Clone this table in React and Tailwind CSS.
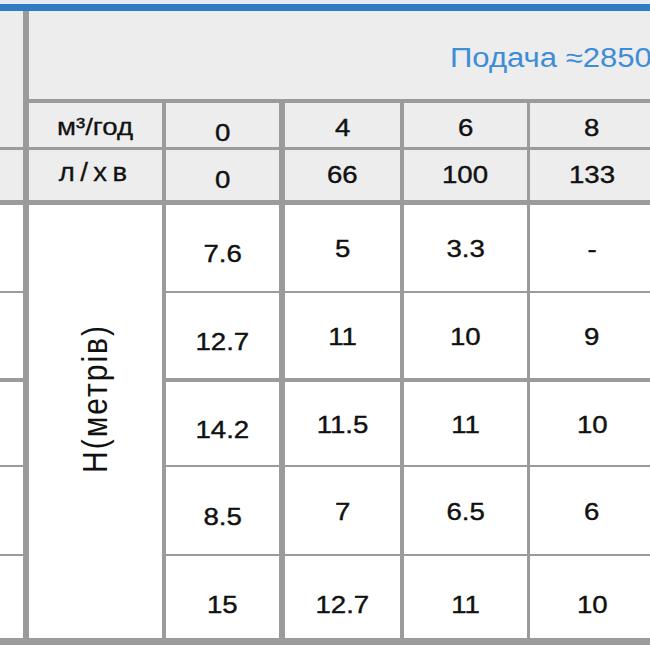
import React from 'react'

const colPos = ['col-start-5', 'col-start-7', 'col-start-9', 'col-start-11']
const rowPos = ['row-start-7', 'row-start-9', 'row-start-11', 'row-start-13', 'row-start-15']

const flowM3 = ['0', '4', '6', '8']
const flowL = ['0', '66', '100', '133']

const heads = [
  ['7.6', '5', '3.3', '-'],
  ['12.7', '11', '10', '9'],
  ['14.2', '11.5', '11', '10'],
  ['8.5', '7', '6.5', '6'],
  ['15', '12.7', '11', '10'],
]

function Cell({ pos, bg = 'bg-white', pad = '', children }) {
  return (
    <div className={`${pos} ${bg} flex items-center justify-center ${pad}`}>
      {children}
    </div>
  )
}

function Num({ children }) {
  return (
    <span className="inline-block scale-x-[1.15] text-[24px] leading-none text-[#111] [-webkit-text-stroke:0.4px_#111]">
      {children}
    </span>
  )
}

function App() {
  return (
    <div className="w-[650px] h-[650px] overflow-hidden bg-white font-['Liberation_Sans','Noto_Sans_CJK_SC',sans-serif]">
      <div className="h-[4px] bg-[#e4ebf2]" />
      <div className="h-[7px] bg-[#2e7dc2]" />

      <div className="w-[654px] grid bg-[#9b9b9b] grid-cols-[23px_6px_133px_4px_113px_6px_115px_4px_123px_3px_124px] grid-rows-[88px_4px_44px_3px_50px_5px_86px_2px_85px_4px_83px_2px_87px_2px_82px_7px]">
        {/* left column (cut off) */}
        <div className="col-start-1 row-start-1 row-end-4 bg-[#ededed]" />
        <div className="col-start-1 row-start-5 bg-[#ededed]" />
        {rowPos.map((r) => (
          <div key={r} className={`col-start-1 ${r} bg-white`} />
        ))}

        {/* flow header */}
        <div className="col-start-3 col-end-12 row-start-1 bg-[#ededed] flex items-center pl-[421px] pt-[6px]">
          <span className="inline-block origin-left scale-x-[1.15] whitespace-nowrap text-[27px] leading-none text-[#3d8ed6]">
            Подача ≈2850
          </span>
        </div>

        <Cell pos="col-start-3 row-start-3" bg="bg-[#ededed]" pad="pt-[4px]">
          <span className="inline-block scale-x-[1.15] text-[24px] leading-none text-[#111] [-webkit-text-stroke:0.3px_#111]">
            м³/год
          </span>
        </Cell>
        <Cell pos="col-start-3 row-start-5" bg="bg-[#ededed]" pad="pb-[6px]">
          <span className="inline-block scale-x-[1.1] tracking-[5px] text-[25px] leading-none text-[#111] [-webkit-text-stroke:0.3px_#111]">
            л/хв
          </span>
        </Cell>

        {flowM3.map((v, i) => (
          <Cell key={'m' + i} pos={`${colPos[i]} row-start-3`} bg="bg-[#ededed]" pad={i === 0 ? 'pt-[16px]' : 'pt-[6px]'}>
            <Num>{v}</Num>
          </Cell>
        ))}
        {flowL.map((v, i) => (
          <Cell key={'l' + i} pos={`${colPos[i]} row-start-5`} bg="bg-[#ededed]" pad={i === 0 ? 'pt-[10px]' : ''}>
            <Num>{v}</Num>
          </Cell>
        ))}

        {/* head label */}
        <div className="col-start-3 row-start-7 row-end-16 bg-white flex items-center justify-center pb-[46px]">
          <span className="inline-block [writing-mode:vertical-rl] rotate-180 scale-x-[1.15] tracking-[2px] text-[30px] leading-none text-[#111] whitespace-nowrap">
            Н(метрів)
          </span>
        </div>

        {heads.map((row, ri) =>
          row.map((v, ci) => (
            <Cell
              key={ri + '-' + ci}
              pos={`${colPos[ci]} ${rowPos[ri]}`}
              pad={ri === 4 ? 'pt-[16px]' : ci === 0 ? 'pt-[12px]' : 'pt-[2px]'}
            >
              <Num>{v}</Num>
            </Cell>
          ))
        )}
      </div>
    </div>
  )
}

export default App
